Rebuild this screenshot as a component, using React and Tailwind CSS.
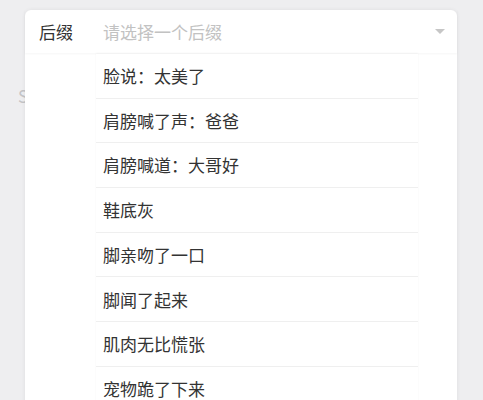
const items = [
  "脸说：太美了",
  "肩膀喊了声：爸爸",
  "肩膀喊道：大哥好",
  "鞋底灰",
  "脚亲吻了一口",
  "脚闻了起来",
  "肌肉无比慌张",
  "宠物跪了下来",
];

export default function App() {
  return (
    <div
      className="relative h-[400px] w-[483px] overflow-hidden bg-[#eeeef0] pl-[25px] pr-[26px] pt-[10px]"
      style={{ fontFamily: '"Noto Sans CJK SC", "Noto Sans", sans-serif' }}
    >
      {/* поле под карточкой */}
      <span className="absolute left-[18px] top-[83px] text-[17px] text-[#c4c4c6]">S</span>

      <div className="relative h-[400px] rounded-t-[6px] bg-white shadow-[0_0_4px_rgba(0,0,0,0.07)]">
        {/* заголовок селекта */}
        <div className="flex h-[43px] items-center pl-[14px] pr-[12px] shadow-[0_1px_2px_rgba(0,0,0,0.04)]">
          <span className="w-[64px] text-[17px] text-[#333]">后缀</span>
          <span className="flex-1 text-[17px] text-[#c2c2c2]">请选择一个后缀</span>
          <span className="h-0 w-0 border-x-[5px] border-t-[5px] border-x-transparent border-t-[#c6c6c6]" />
        </div>

        {/* выпадающий список */}
        <div className="ml-[71px] mt-[1px] w-[322px] bg-white shadow-[0_-1px_2px_rgba(0,0,0,0.04)]">
          {items.map((t) => (
            <div
              key={t}
              className="flex h-[44.7px] items-center border-b border-[#efefef] px-[7px] text-[17px] text-[#333]"
            >
              {t}
            </div>
          ))}
        </div>
      </div>
    </div>
  );
}
